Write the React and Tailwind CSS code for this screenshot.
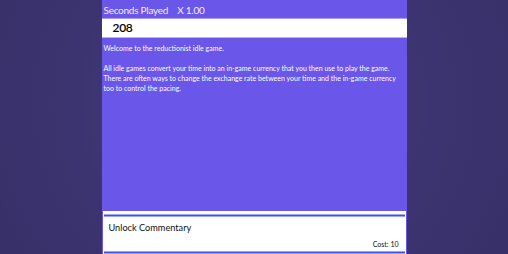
export default function App() {
  return (
    <div
      className="h-[254px] w-full flex justify-center overflow-hidden"
      style={{ background: "radial-gradient(circle at 50% 40%, #4a4379 0%, #3b3470 60%, #383068 100%)" }}
    >
      <div
        className="w-[305px] h-full bg-[#6a56e9] flex flex-col text-white"
        style={{ fontFamily: 'Lato, "Noto Sans", sans-serif' }}
      >
        {/* HEADER */}
        <div className="h-[18px] flex items-center gap-[9px] pl-[2px] pt-[1px] text-[10px] tracking-[-0.25px] leading-none text-[#f0eeff]">
          <span>Seconds Played</span>
          <span>X 1.00</span>
        </div>

        <div className="h-[20px] bg-white border-t border-[#a89cf5] border-b border-b-[#b9b0f5] flex items-center pl-[11px] text-[12px] font-semibold tracking-[-0.3px] text-black leading-none">
          208
        </div>

        {/* BODY */}
        <div className="flex-1 px-[2px] pt-[5px] text-[7px] leading-[10px]">
          <p>Welcome to the reductionist idle game.</p>
          <p className="mt-[10px]">
            All idle games convert your time into an in-game currency that you then use to play the game.
            There are often ways to change the exchange rate between your time and the in-game currency
            too to control the pacing.
          </p>
        </div>

        {/* UNLOCK */}
        <div className="mx-px bg-white h-[43px] flex flex-col text-[#111]">
          <div className="mx-px mt-[3px] h-[3px] bg-[#3f4ff0] border-y border-[#9aa5f6]" />
          <div className="pl-[6px] pt-[6px] text-[9.2px] leading-none">Unlock Commentary</div>
          <div className="mt-auto pr-[7px] text-right text-[7px] leading-none">Cost: 10</div>
          <div className="mx-px mt-[3px] h-[3px] bg-[#3f4ff0] border-y border-[#9aa5f6]" />
        </div>
      </div>
    </div>
  );
}
